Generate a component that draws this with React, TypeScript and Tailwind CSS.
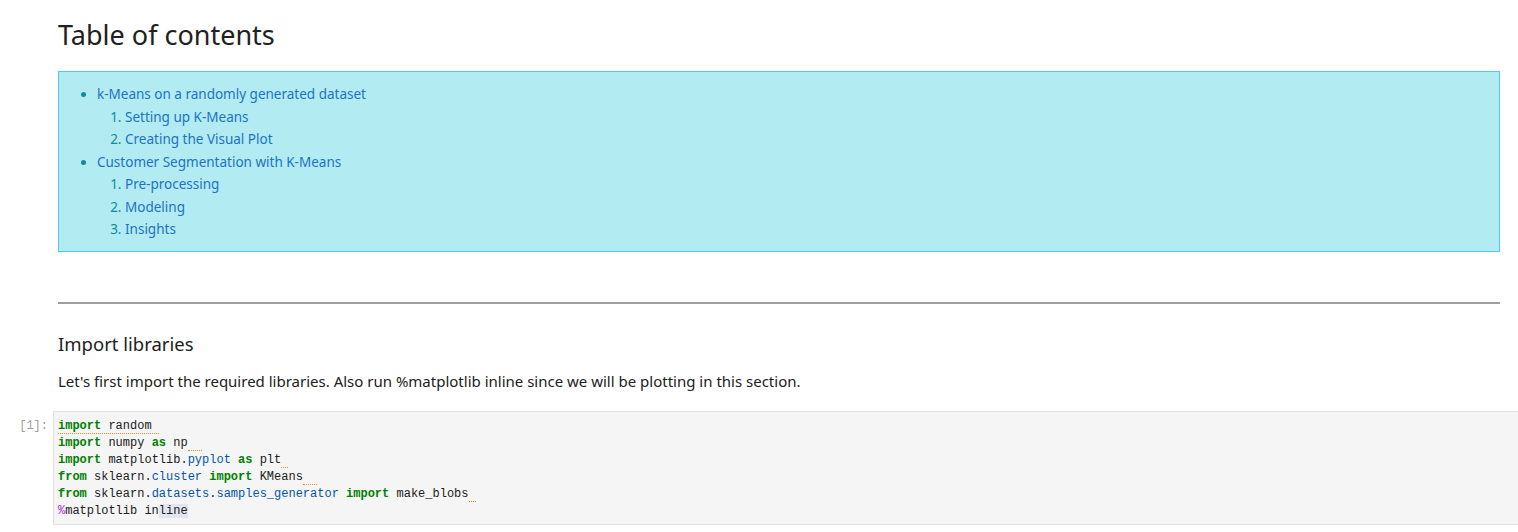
const toc = [
  {
    title: "k-Means on a randomly generated dataset",
    items: ["Setting up K-Means", "Creating the Visual Plot"],
  },
  {
    title: "Customer Segmentation with K-Means",
    items: ["Pre-processing", "Modeling", "Insights"],
  },
];

const kw = "font-bold text-[#008000]";
const prop = "text-[#0055aa]";
const trail = "border-b border-dotted border-[#f08c1a]";

export default function App() {
  return (
    <div className="min-h-[532px] bg-white font-['Noto_Sans',sans-serif] text-[#212121]">
      {/* Markdown cells */}
      <div className="pl-[58px] pr-[18px]">
        <h1 className="pt-[17px] text-[27px] leading-[36px] font-normal text-[#212121]">
          Table of contents
        </h1>

        <div className="mt-[18px] border border-[#4fcfdf] bg-[#b3ebf2] pt-[11px] pb-[10px] text-[13.5px] leading-[22.5px]">
          <ul className="list-disc pl-[38px] marker:text-[#0f8c9c]">
            {toc.map((section) => (
              <li key={section.title}>
                <a className="text-[#1a73c8]">{section.title}</a>
                <ol className="list-decimal pl-[28px] marker:text-[#0f8c9c]">
                  {section.items.map((item) => (
                    <li key={item}>
                      <a className="text-[#1a73c8]">{item}</a>
                    </li>
                  ))}
                </ol>
              </li>
            ))}
          </ul>
        </div>

        <hr className="mt-[50px] border-t-2 border-[#9e9e9e]" />

        <h2 className="mt-[28px] text-[18.5px] leading-[24px] text-[#212121]">
          Import libraries
        </h2>
        <p className="mt-[14px] text-[15px] leading-[22px] text-[#212121]">
          Let's first import the required libraries. Also run %matplotlib inline
          since we will be plotting in this section.
        </p>
      </div>

      {/* Code cell */}
      <div className="mt-[19px] flex">
        <div className="w-[53px] shrink-0 pr-[5px] pt-[7px] text-right font-['Liberation_Mono',monospace] text-[12px] leading-[17px] text-[#9e9e9e]">
          [1]:
        </div>
        <pre className="flex-1 border border-r-0 border-[#e0e0e0] bg-[#f5f5f5] pt-[6px] pb-[4px] pl-[4px] font-['Liberation_Mono',monospace] text-[12px] leading-[17px] text-[#212121]">
          <span className={trail}>
            <span className={kw}>import</span> random{" "}
          </span>
          {"\n"}
          <span className={kw}>import</span> numpy <span className={kw}>as</span> np
          <span className={trail}>{"  "}</span>
          {"\n"}
          <span className={kw}>import</span> matplotlib.<span className={prop}>pyplot</span>{" "}
          <span className={kw}>as</span> plt<span className={trail}> </span>
          {"\n"}
          <span className={kw}>from</span> sklearn.<span className={prop}>cluster</span>{" "}
          <span className={kw}>import</span> KMeans<span className={trail}>{"  "}</span>
          {"\n"}
          <span className={kw}>from</span> sklearn.<span className={prop}>datasets</span>.
          <span className={prop}>samples_generator</span> <span className={kw}>import</span>{" "}
          make_blobs<span className={trail}> </span>
          {"\n"}
          <span className="text-[#aa22ff]">%</span>matplotlib in
          <span className="bg-[#e3e6f0]">line</span>
        </pre>
      </div>
    </div>
  );
}
